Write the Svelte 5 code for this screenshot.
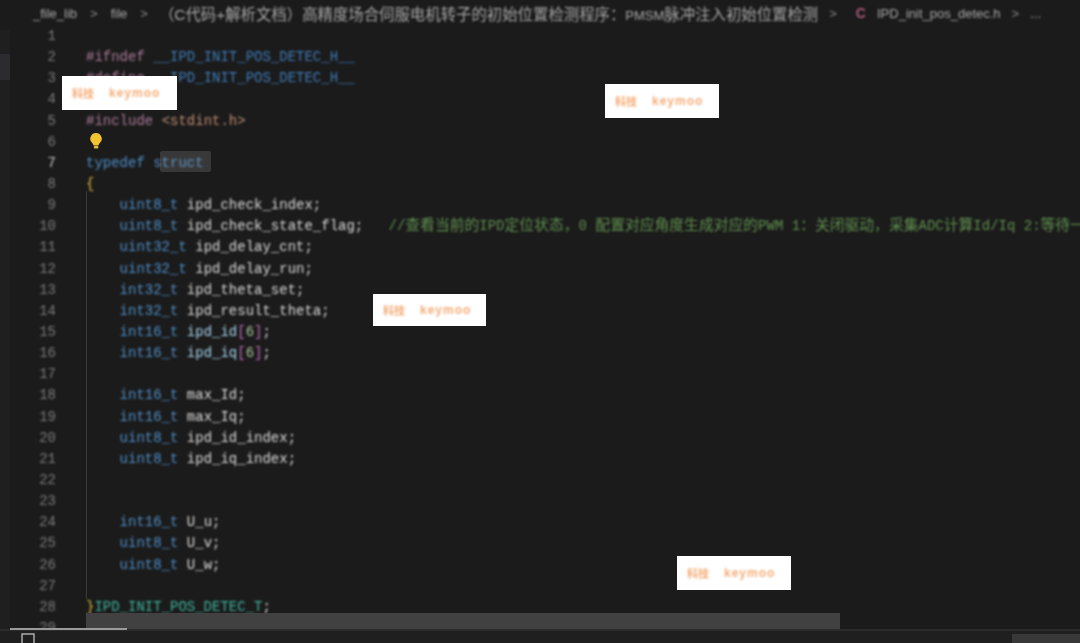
<script>
  const lines = [
    [],
    [['p', '#ifndef '], ['m', '__IPD_INIT_POS_DETEC_H__']],
    [['p', '#define '], ['m', '__IPD_INIT_POS_DETEC_H__']],
    [],
    [['p', '#include '], ['s', '<stdint.h>']],
    [],
    [['k', 'typedef '], ['k', 'struct']],
    [['y', '{']],
    [['i', '    '], ['k', 'uint8_t '], ['v', 'ipd_check_index;']],
    [['i', '    '], ['k', 'uint8_t '], ['v', 'ipd_check_state_flag;'], ['i', '   '],
      ['c', '//'], ['cj', '查看当前的'], ['c', 'IPD'], ['cj', '定位状态，'], ['c', '0 '], ['cj', '配置对应角度生成对应的'],
      ['c', 'PWM 1'], ['cj', '：关闭驱动，采集'], ['c', 'ADC'], ['cj', '计算'], ['c', 'Id/Iq 2:'], ['cj', '等待一段时间']],
    [['i', '    '], ['k', 'uint32_t '], ['v', 'ipd_delay_cnt;']],
    [['i', '    '], ['k', 'uint32_t '], ['v', 'ipd_delay_run;']],
    [['i', '    '], ['k', 'int32_t '], ['v', 'ipd_theta_set;']],
    [['i', '    '], ['k', 'int32_t '], ['v', 'ipd_result_theta;']],
    [['i', '    '], ['k', 'int16_t '], ['a', 'ipd_id'], ['b', '['], ['n', '6'], ['b', ']'], ['v', ';']],
    [['i', '    '], ['k', 'int16_t '], ['a', 'ipd_iq'], ['b', '['], ['n', '6'], ['b', ']'], ['v', ';']],
    [],
    [['i', '    '], ['k', 'int16_t '], ['v', 'max_Id;']],
    [['i', '    '], ['k', 'int16_t '], ['v', 'max_Iq;']],
    [['i', '    '], ['k', 'uint8_t '], ['v', 'ipd_id_index;']],
    [['i', '    '], ['k', 'uint8_t '], ['v', 'ipd_iq_index;']],
    [],
    [],
    [['i', '    '], ['k', 'int16_t '], ['v', 'U_u;']],
    [['i', '    '], ['k', 'uint8_t '], ['v', 'U_v;']],
    [['i', '    '], ['k', 'uint8_t '], ['v', 'U_w;']],
    [],
    [['y', '}'], ['t', 'IPD_INIT_POS_DETEC_T'], ['v', ';']],
    []
  ];
  const marks = [
    { x: 62, y: 50, w: 115, h: 34 },
    { x: 605, y: 58, w: 114, h: 34 },
    { x: 373, y: 268, w: 113, h: 32 },
    { x: 677, y: 530, w: 114, h: 34 }
  ];
</script>

<div class="window">
  <nav class="crumbs">
    <span>_file_lib</span><span class="sep">&gt;</span>
    <span>file</span><span class="sep">&gt;</span>
    <span class="long">（C代码+解析文档）高精度场合伺服电机转子的初始位置检测程序：<span class="latin">PMSM</span>脉冲注入初始位置检测</span><span class="sep end">&gt;</span>
    <span class="cicon">C</span>
    <span>IPD_init_pos_detec.h</span><span class="sep end">&gt;</span>
    <span>...</span>
  </nav>

  <div class="editor">
    <div class="rail"><div class="railmark"></div></div>
    <div class="code">
      {#each lines as line, i}
        <div class="row">
          <span class="num" class:active={i === 6}>{i + 1}</span>
          <div class="text">
            {#each line as seg}<span class={seg[0]}>{seg[1]}</span>{/each}
          </div>
        </div>
      {/each}
    </div>
    <div class="guide"></div>
    <div class="selbox"></div>
    <svg class="bulb" width="16" height="18" viewBox="0 0 16 18" aria-hidden="true">
      <path d="M8 1a5.8 5.8 0 0 0-3.6 10.3c.7.6 1 1.3 1 2.2h5.2c0-.9.3-1.6 1-2.2A5.8 5.8 0 0 0 8 1z" fill="#f4c430" />
      <rect x="5.8" y="14" width="4.6" height="2.6" rx="1" fill="#e0b93e" />
    </svg>
    <div class="scrollbar"></div>
    {#each marks as m}
      <div class="mark" style="left:{m.x}px;top:{m.y}px;width:{m.w}px;height:{m.h}px">
        <span class="m1">科技</span><span class="m2">keymoo</span>
      </div>
    {/each}
  </div>

  <footer class="status">
    <div class="tabline"></div>
    <svg class="sicon" width="16" height="12" viewBox="0 0 16 12" aria-hidden="true">
      <rect x="2" y="3" width="12" height="12" fill="none" stroke="#b5b5b5" stroke-width="1.4" />
    </svg>
    <div class="sbtn"></div>
  </footer>
</div>

<style>
  :global(body) { margin: 0; background: #1b1b1b; }
  .window {
    position: relative;
    width: 1080px;
    height: 643px;
    overflow: hidden;
    background: #1b1b1b;
    display: flex;
    flex-direction: column;
  }
  .crumbs {
    height: 26px;
    flex: none;
    display: flex;
    align-items: center;
    padding-left: 33px;
    font: 13px "Liberation Sans", "Noto Sans CJK SC", sans-serif;
    color: #a8a8a8;
    white-space: nowrap;
    filter: blur(0.8px);
  }
  .sep { margin: 0 13px; color: #8a8a8a; }
  .sep.end { margin: 0 11px; }
  .long { font-size: 15.4px; margin-left: -2px; }
  .latin { font-size: 13px; }
  .cicon { font-weight: 700; font-size: 14px; color: #a9597c; margin: 0 11px 0 8px; }
  .editor {
    position: relative;
    flex: 1;
    min-height: 0;
    overflow: hidden;
  }
  .rail {
    position: absolute;
    left: 0; top: 4px; bottom: 0;
    width: 10px;
    background: #1f1f1f;
  }
  .railmark { margin-top: 24px; height: 26px; background: #2c2c30; }
  .code {
    font: 14px/21.15px "Liberation Mono", "Noto Sans CJK SC", monospace;
    filter: blur(0.8px);
  }
  .row { display: flex; height: 21.15px; white-space: pre; }
  .num { width: 56px; text-align: right; color: #7c7c7c; flex: none; }
  .num.active { color: #c8c8c8; }
  .text { margin-left: 30px; }
  .p { color: #ab7a99; }
  .m { color: #3f7cb9; }
  .s { color: #c28d71; }
  .k { color: #4f90ca; }
  .v { color: #dcdcdc; }
  .a { color: #a9d8f0; }
  .y { color: #dabd3b; }
  .t { color: #3fb59d; }
  .b { color: #c26ac0; }
  .n { color: #a8c99c; }
  .c { color: #60904e; }
  .cj { color: #60904e; font-size: 14.8px; }
  .guide {
    position: absolute;
    left: 86px; top: 165px;
    width: 1px; height: 408px;
    background: #3a3a3a;
  }
  .selbox {
    position: absolute;
    left: 160px; top: 125px;
    width: 51px; height: 21px;
    border-radius: 2px;
    background: rgba(160, 160, 160, 0.22);
  }
  .bulb { position: absolute; left: 88px; top: 106px; filter: blur(0.4px); }
  .scrollbar {
    position: absolute;
    left: 86px; top: 587px;
    width: 754px; height: 17px;
    background: #414141;
  }
  .mark {
    position: absolute;
    box-sizing: border-box;
    background: #fff;
    display: flex;
    align-items: center;
    gap: 15px;
    padding-left: 10px;
    font: 700 11px "Liberation Sans", "Noto Sans CJK SC", sans-serif;
    color: #f5ad78;
  }
  .mark span { filter: blur(1px); }
  .m2 { font-size: 12px; letter-spacing: 1px; }
  .status {
    position: relative;
    flex: none;
    height: 12px;
    background: #1f1f1f;
    border-top: 2px solid #2b2b2b;
  }
  .tabline {
    position: absolute;
    left: 10px; top: -3px;
    width: 117px; height: 2px;
    background: #9a9a9a;
  }
  .sicon { position: absolute; left: 20px; top: 0; filter: blur(0.4px); }
  .sbtn {
    position: absolute;
    right: 0; top: 3px; bottom: 0;
    width: 68px;
    background: #383838;
  }
</style>
